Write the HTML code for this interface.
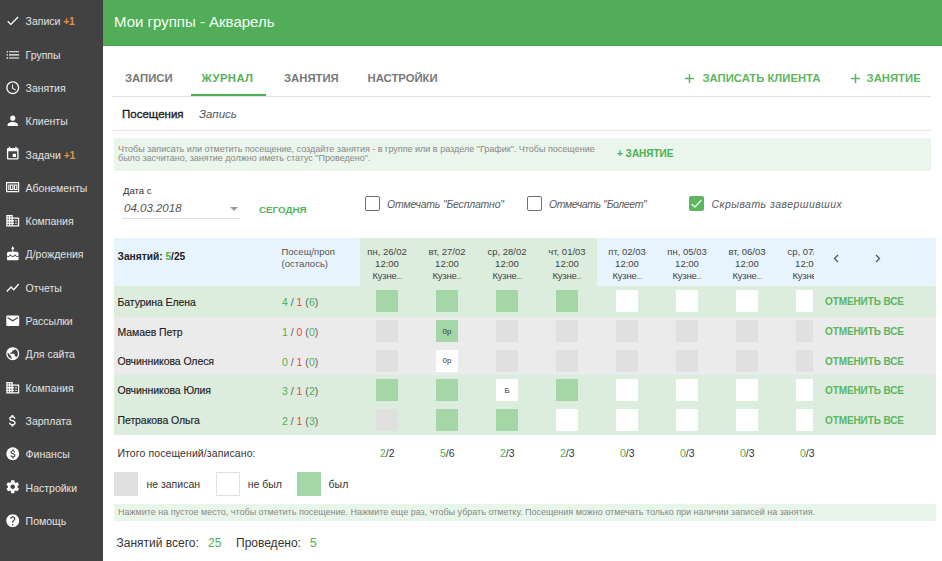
<!DOCTYPE html>
<html><head><meta charset="utf-8">
<style>
*{margin:0;padding:0;box-sizing:border-box}
html,body{width:942px;height:561px;overflow:hidden;background:#fff;font-family:"Liberation Sans",sans-serif;color:#212121}
.a{position:absolute;white-space:nowrap}
#side{position:absolute;left:0;top:0;width:103px;height:561px;background:#424242}
.si{position:absolute;left:0;width:103px;height:20px}
.si svg{position:absolute;left:4.7px;top:2.25px;width:15.5px;height:15.5px;fill:#fff}
.si span{position:absolute;left:25.6px;top:3.4px;font-size:10.5px;line-height:14px;color:#e2e2e2}
.si b{font-weight:bold;color:#e0924a;letter-spacing:-0.4px}
#hdr{position:absolute;left:103px;top:0;width:839px;height:46px;background:#52ad59;border-bottom:1px solid #4a9f51}
.tab{position:absolute;top:71px;font-weight:bold;font-size:11.3px;line-height:14px;color:#777}
.g{color:#4caf50}
.r{color:#f44336}
.sq{position:absolute;width:22px;height:22px}
.cg{background:#a5d6a7}
.cx{background:#e0e0e0}
.cw{background:#fff}
.ct{position:absolute;left:0;top:6.6px;width:22px;text-align:center;font-family:"Liberation Sans",sans-serif;font-size:8px;line-height:10px;color:#333}
.row{position:absolute;left:114px;width:822px;height:29.75px}
.rg{background:#dcedde}
.rx{background:#ebebeb}
.nm{position:absolute;left:3.5px;top:8.3px;font-size:10.5px;line-height:14px;color:#222;letter-spacing:-0.08px;-webkit-text-stroke:0.15px #222}
.st{position:absolute;left:168px;top:8.7px;font-size:10.5px;line-height:14px;color:#616161}
.cancel{position:absolute;left:711px;top:8.7px;font-weight:bold;font-size:10px;line-height:14px;color:#5db561;letter-spacing:-0.1px}
.dh{position:absolute;top:245.9px;width:60px;text-align:center;font-size:9.5px;line-height:11.9px;color:#444}
.kz{letter-spacing:-0.2px}.kz i{font-style:normal;font-size:7px;letter-spacing:-0.3px}
.tot{position:absolute;top:445.5px;font-size:10.5px;line-height:14px;color:#333}
</style></head><body>
<div id="side">
  <div class="si" style="top:11px"><svg viewBox="0 0 24 24"><path d="M9 16.17L4.83 12l-1.42 1.41L9 19 21 7l-1.41-1.41z"/></svg><span>Записи <b>+1</b></span></div>
  <div class="si" style="top:44.3px"><svg viewBox="0 0 24 24"><path d="M2.6 6.4h2v2h-2zM2.6 11.2h2v2h-2zM2.6 16h2v2h-2zM6.2 6.6h15.6v1.6H6.2zM6.2 11.4h15.6v1.6H6.2zM6.2 16.2h15.6v1.6H6.2z"/></svg><span>Группы</span></div>
  <div class="si" style="top:77.6px"><svg viewBox="0 0 24 24"><path d="M11.99 2C6.47 2 2 6.48 2 12s4.47 10 9.99 10C17.52 22 22 17.52 22 12S17.52 2 11.99 2zM12 20c-4.42 0-8-3.58-8-8s3.58-8 8-8 8 3.58 8 8-3.58 8-8 8zm.5-13H11v6l5.25 3.15.75-1.23-4.5-2.67z"/></svg><span>Занятия</span></div>
  <div class="si" style="top:110.9px"><svg viewBox="0 0 24 24"><path d="M12 12c2.21 0 4-1.79 4-4s-1.79-4-4-4-4 1.79-4 4 1.79 4 4 4zm0 2c-2.67 0-8 1.34-8 4v2h16v-2c0-2.66-5.33-4-8-4z"/></svg><span>Клиенты</span></div>
  <div class="si" style="top:144.2px"><svg viewBox="0 0 24 24"><path d="M17 12h-5v5h5v-5zM16 1v2H8V1H6v2H5c-1.11 0-1.99.9-1.99 2L3 19c0 1.1.89 2 2 2h14c1.1 0 2-.9 2-2V5c0-1.1-.9-2-2-2h-1V1h-2zm3 18H5V8h14v11z"/></svg><span>Задачи <b>+1</b></span></div>
  <div class="si" style="top:177.5px"><svg viewBox="0 0 16 12" style="left:5px;top:3.5px;width:16px;height:12px"><path fill-rule="evenodd" d="M1 1H14.2V11.3H1ZM2.2 2.2V10.1H13V2.2ZM3.3 3.4H4.3V9.1H3.3ZM4.8 3.4H8.4V9.1H4.8ZM5.9 4.6V7.9H7.3V4.6ZM8.9 3.4H12.4V9.1H8.9ZM10 4.6V7.9H11.3V4.6Z"/></svg><span>Абонементы</span></div>
  <div class="si" style="top:210.8px"><svg viewBox="0 0 24 24"><path d="M12 7V3H2v18h20V7H12zM6 19H4v-2h2v2zm0-4H4v-2h2v2zm0-4H4V9h2v2zm0-4H4V5h2v2zm4 12H8v-2h2v2zm0-4H8v-2h2v2zm0-4H8V9h2v2zm0-4H8V5h2v2zm10 12h-8v-2h2v-2h-2v-2h2v-2h-2V9h8v10zm-2-8h-2v2h2v-2zm0 4h-2v2h2v-2z"/></svg><span>Компания</span></div>
  <div class="si" style="top:244.1px"><svg viewBox="0 0 24 24"><path d="M12 6c1.11 0 2-.9 2-2 0-.38-.1-.73-.29-1.03L12 0l-1.710 2.970c-.19.3-.29.65-.29 1.03 0 1.1.9 2 2 2zm4.6 9.99l-1.07-1.07-1.08 1.07c-1.3 1.3-3.58 1.31-4.89 0l-1.07-1.07-1.09 1.07C6.75 16.64 5.88 17 4.96 17c-.73 0-1.4-.23-1.96-.61V21c0 .55.45 1 1 1h16c.55 0 1-.45 1-1v-4.61c-.56.38-1.23.61-1.960.61-.92 0-1.79-.36-2.44-1.01zM18 9h-5V7h-2v2H6c-1.66 0-3 1.34-3 3v1.54c0 1.08.88 1.96 1.96 1.96.52 0 1.02-.2 1.38-.57l2.14-2.13 2.13 2.13c.74.74 2.03.74 2.77 0l2.14-2.13 2.13 2.13c.37.37.86.57 1.38.57 1.08 0 1.96-.88 1.96-1.96V12C21 10.34 19.66 9 18 9z"/></svg><span>Д/рождения</span></div>
  <div class="si" style="top:277.4px"><svg viewBox="0 0 24 24"><path d="M3.5 18.49l6-6.01 4 4L22 6.92l-1.41-1.41-7.09 7.970-4-4L2 16.99z"/></svg><span>Отчеты</span></div>
  <div class="si" style="top:310.7px"><svg viewBox="0 0 24 24"><path d="M20 4H4c-1.1 0-1.99.9-1.99 2L2 18c0 1.1.9 2 2 2h16c1.1 0 2-.9 2-2V6c0-1.1-.9-2-2-2zm0 4l-8 5-8-5V6l8 5 8-5v2z"/></svg><span>Рассылки</span></div>
  <div class="si" style="top:344px"><svg viewBox="0 0 24 24"><path d="M12 2C6.48 2 2 6.48 2 12s4.48 10 10 10 10-4.48 10-10S17.52 2 12 2zm-1 17.93c-3.95-.49-7-3.85-7-7.93 0-.62.08-1.21.21-1.79L9 15v1c0 1.1.9 2 2 2v1.93zm6.9-2.54c-.26-.81-1-1.39-1.9-1.39h-1v-3c0-.55-.45-1-1-1H8v-2h2c.55 0 1-.45 1-1V7h2c1.1 0 2-.9 2-2v-.41c2.93 1.19 5 4.06 5 7.41 0 2.08-.8 3.97-2.1 5.39z"/></svg><span>Для сайта</span></div>
  <div class="si" style="top:377.3px"><svg viewBox="0 0 24 24"><path d="M12 7V3H2v18h20V7H12zM6 19H4v-2h2v2zm0-4H4v-2h2v2zm0-4H4V9h2v2zm0-4H4V5h2v2zm4 12H8v-2h2v2zm0-4H8v-2h2v2zm0-4H8V9h2v2zm0-4H8V5h2v2zm10 12h-8v-2h2v-2h-2v-2h2v-2h-2V9h8v10zm-2-8h-2v2h2v-2zm0 4h-2v2h2v-2z"/></svg><span>Компания</span></div>
  <div class="si" style="top:410.6px"><svg viewBox="0 0 24 24"><path d="M11.8 10.9c-2.27-.59-3-1.2-3-2.15 0-1.090 1.01-1.85 2.7-1.85 1.78 0 2.44.85 2.5 2.1h2.21c-.07-1.72-1.12-3.3-3.21-3.81V3h-3v2.16c-1.94.42-3.5 1.68-3.5 3.61 0 2.31 1.91 3.46 4.7 4.13 2.5.6 3 1.48 3 2.41 0 .69-.49 1.79-2.7 1.79-2.06 0-2.87-.92-2.98-2.1h-2.2c.12 2.19 1.76 3.42 3.68 3.83V21h3v-2.15c1.95-.37 3.5-1.5 3.5-3.55 0-2.84-2.43-3.81-4.7-4.4z"/></svg><span>Зарплата</span></div>
  <div class="si" style="top:443.9px"><svg viewBox="0 0 24 24"><circle cx="12" cy="12" r="10"/><path fill="#424242" d="M12.6 11.3c-1.7-.44-2.25-.9-2.25-1.6 0-.82.76-1.4 2.02-1.4 1.33 0 1.83.64 1.88 1.58h1.66c-.05-1.29-.84-2.48-2.41-2.86V5.4h-2.25v1.6c-1.45.32-2.62 1.26-2.62 2.7 0 1.73 1.43 2.6 3.52 3.1 1.88.45 2.25 1.11 2.25 1.8 0 .52-.37 1.34-2.02 1.34-1.55 0-2.15-.69-2.24-1.58h-1.65c.09 1.64 1.32 2.57 2.76 2.87v1.62h2.25v-1.61c1.46-.28 2.62-1.12 2.62-2.66 0-2.13-1.82-2.86-3.52-3.3z"/></svg><span>Финансы</span></div>
  <div class="si" style="top:477.2px"><svg viewBox="0 0 24 24"><path d="M19.43 12.98c.04-.32.07-.64.07-.98s-.03-.66-.07-.98l2.11-1.65c.19-.15.24-.42.12-.64l-2-3.46c-.12-.22-.39-.3-.61-.22l-2.49 1c-.52-.4-1.08-.73-1.69-.98l-.38-2.65C14.46 2.18 14.25 2 14 2h-4c-.25 0-.46.18-.49.42l-.38 2.65c-.61.25-1.17.59-1.690.98l-2.49-1c-.23-.09-.49 0-.61.22l-2 3.46c-.13.22-.07.49.12.64l2.11 1.65c-.04.32-.07.65-.07.98s.03.66.07.98l-2.11 1.65c-.19.15-.24.42-.12.64l2 3.46c.12.22.39.3.61.22l2.49-1c.52.4 1.08.73 1.69.98l.38 2.65c.03.24.24.42.49.42h4c.25 0 .46-.18.49-.42l.38-2.65c.61-.25 1.17-.59 1.69-.98l2.49 1c.23.09.49 0 .61-.22l2-3.46c.12-.22.07-.49-.12-.64l-2.11-1.65zM12 15.5c-1.93 0-3.5-1.57-3.5-3.5s1.57-3.5 3.5-3.5 3.5 1.57 3.5 3.5-1.57 3.5-3.5 3.5z"/></svg><span>Настройки</span></div>
  <div class="si" style="top:510.5px"><svg viewBox="0 0 24 24"><path d="M12 2C6.48 2 2 6.48 2 12s4.48 10 10 10 10-4.48 10-10S17.52 2 12 2zm1 17h-2v-2h2v2zm2.07-7.75l-.9.92C13.45 12.9 13 13.5 13 15h-2v-.5c0-1.1.45-2.1 1.17-2.83l1.24-1.26c.37-.36.59-.86.59-1.41 0-1.1-.9-2-2-2s-2 .9-2 2H8c0-2.21 1.79-4 4-4s4 1.79 4 4c0 .88-.36 1.680-.93 2.25z"/></svg><span>Помощь</span></div>
</div>

<div id="hdr"><div class="a" style="left:11px;top:13px;font-size:15px;line-height:18px;color:#f4fff4">Мои группы - Акварель</div></div>

<!-- tabs -->
<div class="a tab" style="left:125px">ЗАПИСИ</div>
<div class="a tab" style="left:201.6px;color:#56b25a;letter-spacing:0.4px">ЖУРНАЛ</div>
<div class="a tab" style="left:284px">ЗАНЯТИЯ</div>
<div class="a tab" style="left:367.5px">НАСТРОЙКИ</div>
<div class="a" style="left:191px;top:94px;width:75px;height:2px;background:#4caf50"></div>
<div class="a" style="left:112px;top:96px;width:819px;height:1px;background:#e0e0e0"></div>
<svg class="a" style="left:685px;top:73.5px;width:9px;height:9px" viewBox="0 0 9 9"><path d="M4.5 0V9M0 4.5H9" stroke="#5cb660" stroke-width="1.5"/></svg>
<div class="a tab" style="left:702.5px;color:#5cb660">ЗАПИСАТЬ КЛИЕНТА</div>
<svg class="a" style="left:850.5px;top:73.5px;width:9px;height:9px" viewBox="0 0 9 9"><path d="M4.5 0V9M0 4.5H9" stroke="#5cb660" stroke-width="1.5"/></svg>
<div class="a tab" style="left:866.6px;color:#5cb660">ЗАНЯТИЕ</div>

<!-- subtabs -->
<div class="a" style="left:122px;top:107px;font-size:11.5px;line-height:14px;color:#222;-webkit-text-stroke:0.35px #222">Посещения</div>
<div class="a" style="left:199px;top:107px;font-size:11.5px;line-height:14px;color:#555;font-style:italic">Запись</div>
<div class="a" style="left:112px;top:130px;width:819px;height:1px;background:#e8e8e8"></div>

<!-- info box -->
<div class="a" style="left:114px;top:138px;width:817px;height:33px;background:#eaf5eb"></div>
<div class="a" style="left:118px;top:144.7px;font-size:9px;line-height:9.5px;color:#888">Чтобы записать или отметить посещение, создайте занятия - в группе или в разделе "График". Чтобы посещение<br>было засчитано, занятие должно иметь статус "Проведено".</div>
<div class="a" style="left:617px;top:148px;font-size:10px;line-height:12px;font-weight:bold;color:#4caf50">+ ЗАНЯТИЕ</div>

<!-- date -->
<div class="a" style="left:123px;top:185px;font-size:9.5px;line-height:12px;color:#333">Дата с</div>
<div class="a" style="left:124px;top:200.6px;font-size:11.5px;line-height:14px;color:#555;font-style:italic">04.03.2018</div>
<div class="a" style="left:230px;top:207px;width:0;height:0;border-left:4px solid transparent;border-right:4px solid transparent;border-top:4px solid #999"></div>
<div class="a" style="left:121.5px;top:218px;width:118px;height:1px;background:#ddd"></div>
<div class="a" style="left:259px;top:204px;font-size:9.8px;line-height:12px;font-weight:bold;color:#56b25a">СЕГОДНЯ</div>

<!-- checkboxes -->
<div class="a" style="left:365px;top:196px;width:15px;height:15px;border:1.7px solid #707070;border-radius:2px"></div>
<div class="a" style="left:387px;top:197px;font-size:10.5px;line-height:14px;color:#5a5a5a;font-style:italic;letter-spacing:-0.2px">Отмечать "Бесплатно"</div>
<div class="a" style="left:527px;top:196px;width:15px;height:15px;border:1.7px solid #707070;border-radius:2px"></div>
<div class="a" style="left:549px;top:197px;font-size:10.5px;line-height:14px;color:#5a5a5a;font-style:italic;letter-spacing:-0.38px">Отмечать "Болеет"</div>
<div class="a" style="left:688.5px;top:196px;width:15px;height:15px;background:#5cb660;border-radius:2px"><svg viewBox="0 0 15 15" style="position:absolute;left:0;top:0;width:15px;height:15px"><path d="M2.6 8.1L5.9 11L12.3 4.3" fill="none" stroke="#eaffea" stroke-width="1.3"/></svg></div>
<div class="a" style="left:711.5px;top:197px;font-size:10.5px;line-height:14px;color:#5a5a5a;font-style:italic;letter-spacing:0.45px">Скрывать завершивших</div>

<!-- table header -->
<div class="a" style="left:114px;top:238px;width:822px;height:48.4px;background:#e8f4fd"></div>
<div class="a" style="left:360px;top:238px;width:236.7px;height:48.4px;background:#dcedde"></div>
<div class="a" style="left:117.5px;top:250px;font-size:10.2px;line-height:14px;font-weight:bold;color:#222">Занятий: <span class="g">5</span>/25</div>
<div class="a" style="left:281.5px;top:245.6px;font-size:9.5px;line-height:12.5px;color:#555">Посещ/проп<br>(осталось)</div>
<div class="a dh" style="left:357px">пн, 26/02<br>12:00<br><span class="kz">Кузне<i>...</i></span></div>
<div class="a dh" style="left:417px">вт, 27/02<br>12:00<br><span class="kz">Кузне<i>...</i></span></div>
<div class="a dh" style="left:477px">ср, 28/02<br>12:00<br><span class="kz">Кузне<i>...</i></span></div>
<div class="a dh" style="left:537px">чт, 01/03<br>12:00<br><span class="kz">Кузне<i>...</i></span></div>
<div class="a dh" style="left:597px">пт, 02/03<br>12:00<br><span class="kz">Кузне<i>...</i></span></div>
<div class="a dh" style="left:657px">пн, 05/03<br>12:00<br><span class="kz">Кузне<i>...</i></span></div>
<div class="a dh" style="left:717px">вт, 06/03<br>12:00<br><span class="kz">Кузне<i>...</i></span></div>
<div class="a" style="left:777px;top:238px;width:37px;height:47px;overflow:hidden"><div class="a dh" style="left:0;top:7.9px">ср, 07/03<br>12:00<br><span class="kz">Кузне<i>...</i></span></div></div>
<svg class="a" style="left:832px;top:254px;width:8px;height:9px" viewBox="0 0 8 9"><path d="M6 1L2.5 4.5L6 8" fill="none" stroke="#555" stroke-width="1.3"/></svg>
<svg class="a" style="left:874px;top:254px;width:8px;height:9px" viewBox="0 0 8 9"><path d="M2 1L5.5 4.5L2 8" fill="none" stroke="#555" stroke-width="1.3"/></svg>

<!-- rows -->
<div class="row rg" style="top:286.4px;height:30.35px"><div class="a nm">Батурина Елена</div><div class="a st"><span class="g">4</span> / <span class="r">1</span> (<span class="g">6</span>)</div><div class="a cancel">ОТМЕНИТЬ ВСЕ</div></div>
<div class="row rx" style="top:316.75px;height:29.15px"><div class="a nm">Мамаев Петр</div><div class="a st"><span class="g">1</span> / <span class="r">0</span> (<span class="g">0</span>)</div><div class="a cancel">ОТМЕНИТЬ ВСЕ</div></div>
<div class="row rx" style="top:345.9px;height:29.1px"><div class="a nm">Овчинникова Олеся</div><div class="a st"><span class="g">0</span> / <span class="r">1</span> (<span class="g">0</span>)</div><div class="a cancel">ОТМЕНИТЬ ВСЕ</div></div>
<div class="row rg" style="top:375px;height:29.9px"><div class="a nm">Овчинникова Юлия</div><div class="a st"><span class="g">3</span> / <span class="r">1</span> (<span class="g">2</span>)</div><div class="a cancel">ОТМЕНИТЬ ВСЕ</div></div>
<div class="row rg" style="top:404.9px;height:29.9px"><div class="a nm">Петракова Ольга</div><div class="a st"><span class="g">2</span> / <span class="r">1</span> (<span class="g">3</span>)</div><div class="a cancel">ОТМЕНИТЬ ВСЕ</div></div>

<div id="cells">
<div class="sq cg" style="left:376px;top:290.1px;width:22px"></div>
<div class="sq cg" style="left:436px;top:290.1px;width:22px"></div>
<div class="sq cg" style="left:496px;top:290.1px;width:22px"></div>
<div class="sq cg" style="left:556px;top:290.1px;width:22px"></div>
<div class="sq cw" style="left:616px;top:290.1px;width:22px"></div>
<div class="sq cw" style="left:676px;top:290.1px;width:22px"></div>
<div class="sq cw" style="left:736px;top:290.1px;width:22px"></div>
<div class="sq cw" style="left:796px;top:290.1px;width:17px"></div>
<div class="sq cx" style="left:376px;top:320.2px;width:22px"></div>
<div class="sq cg" style="left:436px;top:320.2px;width:22px"><span class="ct">0р</span></div>
<div class="sq cx" style="left:496px;top:320.2px;width:22px"></div>
<div class="sq cx" style="left:556px;top:320.2px;width:22px"></div>
<div class="sq cx" style="left:616px;top:320.2px;width:22px"></div>
<div class="sq cx" style="left:676px;top:320.2px;width:22px"></div>
<div class="sq cx" style="left:736px;top:320.2px;width:22px"></div>
<div class="sq cx" style="left:796px;top:320.2px;width:17px"></div>
<div class="sq cx" style="left:376px;top:349.5px;width:22px"></div>
<div class="sq cw" style="left:436px;top:349.5px;width:22px"><span class="ct">0р</span></div>
<div class="sq cx" style="left:496px;top:349.5px;width:22px"></div>
<div class="sq cx" style="left:556px;top:349.5px;width:22px"></div>
<div class="sq cx" style="left:616px;top:349.5px;width:22px"></div>
<div class="sq cx" style="left:676px;top:349.5px;width:22px"></div>
<div class="sq cx" style="left:736px;top:349.5px;width:22px"></div>
<div class="sq cx" style="left:796px;top:349.5px;width:17px"></div>
<div class="sq cg" style="left:376px;top:379.0px;width:22px"></div>
<div class="sq cg" style="left:436px;top:379.0px;width:22px"></div>
<div class="sq cw" style="left:496px;top:379.0px;width:22px"><span class="ct">Б</span></div>
<div class="sq cg" style="left:556px;top:379.0px;width:22px"></div>
<div class="sq cw" style="left:616px;top:379.0px;width:22px"></div>
<div class="sq cw" style="left:676px;top:379.0px;width:22px"></div>
<div class="sq cw" style="left:736px;top:379.0px;width:22px"></div>
<div class="sq cw" style="left:796px;top:379.0px;width:17px"></div>
<div class="sq cx" style="left:376px;top:409.0px;width:22px"></div>
<div class="sq cg" style="left:436px;top:409.0px;width:22px"></div>
<div class="sq cg" style="left:496px;top:409.0px;width:22px"></div>
<div class="sq cw" style="left:556px;top:409.0px;width:22px"></div>
<div class="sq cw" style="left:616px;top:409.0px;width:22px"></div>
<div class="sq cw" style="left:676px;top:409.0px;width:22px"></div>
<div class="sq cw" style="left:736px;top:409.0px;width:22px"></div>
<div class="sq cw" style="left:796px;top:409.0px;width:17px"></div>
</div>

<!-- totals -->
<div class="a" style="left:117.4px;top:445.5px;font-size:10.5px;line-height:14px;color:#333;letter-spacing:0.1px">Итого посещений/записано:</div>
<div class="a tot" style="left:380px"><span class="g">2</span>/2</div>
<div class="a tot" style="left:440px"><span class="g">5</span>/6</div>
<div class="a tot" style="left:500px"><span class="g">2</span>/3</div>
<div class="a tot" style="left:560px"><span class="g">2</span>/3</div>
<div class="a tot" style="left:620px"><span class="g">0</span>/3</div>
<div class="a tot" style="left:680px"><span class="g">0</span>/3</div>
<div class="a tot" style="left:740px"><span class="g">0</span>/3</div>
<div class="a tot" style="left:800px"><span class="g">0</span>/3</div>

<!-- legend -->
<div class="a" style="left:114px;top:471.5px;width:24px;height:24px;background:#e0e0e0"></div>
<div class="a" style="left:146.4px;top:476.7px;font-size:10.5px;line-height:14px;color:#333">не записан</div>
<div class="a" style="left:215.5px;top:471.5px;width:24.5px;height:24px;border:1px solid #e0e0e0;background:#fff"></div>
<div class="a" style="left:247.7px;top:476.7px;font-size:10.5px;line-height:14px;color:#333">не был</div>
<div class="a" style="left:297px;top:471.5px;width:24px;height:24px;background:#a5d6a7"></div>
<div class="a" style="left:328.6px;top:476.7px;font-size:10.5px;line-height:14px;color:#333">был</div>

<div class="a" style="left:114px;top:504px;width:822px;height:17px;background:#e8f5e9"></div>
<div class="a" style="left:118px;top:507px;font-size:9px;line-height:11px;color:#888">Нажмите на пустое место, чтобы отметить посещение. Нажмите еще раз, чтобы убрать отметку. Посещения можно отмечать только при наличии записей на занятия.</div>

<div class="a" style="left:116.5px;top:536px;font-size:12px;line-height:14px;color:#333">Занятий всего:</div>
<div class="a" style="left:208px;top:536px;font-size:12px;line-height:14px;color:#4caf50">25</div>
<div class="a" style="left:236px;top:536px;font-size:12px;line-height:14px;color:#333">Проведено:</div>
<div class="a" style="left:310px;top:536px;font-size:12px;line-height:14px;color:#4caf50">5</div>
</body></html>
